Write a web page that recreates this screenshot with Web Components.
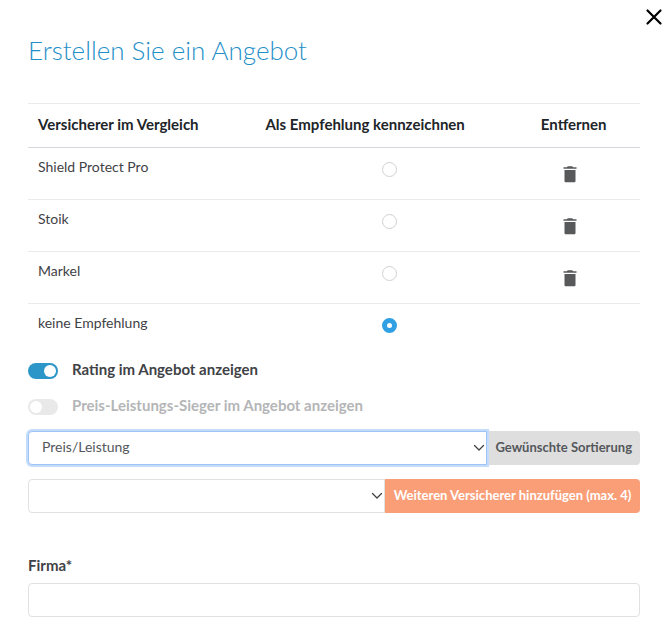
<!DOCTYPE html>
<html lang="de">
<head>
<meta charset="utf-8">
<meta name="viewport" content="width=device-width, initial-scale=1">
<title>Erstellen Sie ein Angebot</title>
<style>
    body{
        margin:0;
        background:#fff;
        color:#3f4246;
        font-family: Lato, "Liberation Sans", sans-serif;
        font-size:14px;
        line-height:20px;
    }
</style>
</head>
<body>
<offer-dialog>
    <span slot="title">Erstellen Sie ein Angebot</span>
    <insurer-table></insurer-table>
    <toggle-switch checked>Rating im Angebot anzeigen</toggle-switch>
    <toggle-switch disabled>Preis-Leistungs-Sieger im Angebot anzeigen</toggle-switch>
    <sort-select></sort-select>
    <add-insurer>Weiteren Versicherer hinzufügen (max. 4)</add-insurer>
    <text-field>Firma*</text-field>
</offer-dialog>

<script>
const CHEVRON = `<svg class="chevron" viewBox="0 0 12 12" aria-hidden="true"><path d="M1.5 3.5 6 8l4.5-4.5" fill="none" stroke="#3f4246" stroke-width="1.3" stroke-linecap="round" stroke-linejoin="round"/></svg>`;

//Estilos comunes de los grupos select + etiqueta o botón
const GROUP_CSS = `
    :host{ display:block; }
    .group{ display:flex; height:34px; }
    .box{ display:grid; flex:1; min-width:0; align-items:center; }
    select{
        grid-area:1 / 1;
        box-sizing:border-box;
        width:100%;
        height:34px;
        margin:0;
        padding:0 28px 2px 13px;
        appearance:none;
        border:1px solid #e0e1e3;
        border-radius:4px 0 0 4px;
        background:#fff;
        color:#54575b;
        font:inherit;
        outline:none;
    }
    .chevron{
        grid-area:1 / 1;
        justify-self:end;
        width:12px;
        height:12px;
        margin-right:2px;
        pointer-events:none;
    }
    .addon{
        box-sizing:border-box;
        display:flex;
        align-items:center;
        justify-content:center;
        margin:0;
        padding:0 8px 2px;
        border:0;
        border-radius:0 4px 4px 0;
        font:inherit;
        font-size:13px;
        font-weight:700;
        white-space:nowrap;
    }
`;

class OfferDialog extends HTMLElement {
    constructor(){
        super();
        this.attachShadow({ mode : 'open' });
        this.shadowRoot.innerHTML = this.componentCSS() + this.componentHTML();
    }

    componentCSS(){
        return `
            <style>
                :host{ display:block; }
                header{
                    display:flex;
                    justify-content:flex-end;
                    padding:7px 6px 0;
                }
                button{
                    display:flex;
                    margin:0;
                    padding:0;
                    border:0;
                    background:none;
                    cursor:pointer;
                }
                svg{ width:20px; height:20px; }
                main{ padding:0 30px 12px 28px; }
                h1{
                    margin:7px 0 37px;
                    color:#1f8fc8;
                    font-size:26px;
                    font-weight:300;
                    line-height:32px;
                }
                ::slotted(toggle-switch){ margin-bottom:16px; }
                ::slotted(sort-select){ margin-bottom:14px; }
                ::slotted(add-insurer){ margin-bottom:42px; }
            </style>`;
    }

    componentHTML(){
        return `
            <header>
                <button type="button" id="close" aria-label="Schließen">
                    <svg viewBox="0 0 20 20" aria-hidden="true"><path d="M3.5 3.5 16.5 16.5M16.5 3.5 3.5 16.5" stroke="#000" stroke-width="2.2" stroke-linecap="round"/></svg>
                </button>
            </header>
            <main>
                <h1><slot name="title"></slot></h1>
                <slot></slot>
            </main>`;
    }

    connectedCallback(){
        this.shadowRoot.getElementById('close').addEventListener('click', e => this.remove())
    }
}

class InsurerTable extends HTMLElement {
    constructor(){
        super();
        this.insurers = [
            { id : 'shield', nombre : 'Shield Protect Pro' },
            { id : 'stoik', nombre : 'Stoik' },
            { id : 'markel', nombre : 'Markel' }
        ];
        this.attachShadow({ mode : 'open' });
        this.shadowRoot.innerHTML = this.componentCSS() + this.componentHTML();
        this.table = this.shadowRoot.getElementById('tableContent');
    }

    componentCSS(){
        return `
            <style>
                :host{ display:block; margin-bottom:11px; }
                table{
                    width:100%;
                    table-layout:fixed;
                    border-collapse:collapse;
                }
                th, td{
                    box-sizing:border-box;
                    padding:0 0 0 10px;
                    border-top:1px solid #e9eaec;
                    text-align:left;
                }
                th{
                    height:44px;
                    padding:0 0 4px 11px;
                    border-bottom:1px solid #d5d9dd;
                    color:#212529;
                    font-size:15px;
                    font-weight:700;
                    white-space:nowrap;
                }
                th:first-child{ padding-left:10px; }
                td{
                    height:52px;
                    padding-top:9px;
                    vertical-align:top;
                }
                tr:last-child td{ height:44px; }
                th:nth-child(1){ width:37%; }
                th:nth-child(2){ width:45%; }
                td:nth-child(2){
                    padding:14px 6px 0 0;
                    text-align:center;
                }
                td:nth-child(3){ padding:14px 0 0 28px; }
                input{
                    appearance:none;
                    box-sizing:border-box;
                    display:block;
                    width:15px;
                    height:15px;
                    margin:0 auto;
                    border:1px solid #cfd1d4;
                    border-radius:50%;
                    background:#fff;
                }
                input:checked{
                    border:5px solid #2fa0e3;
                }
                button{
                    display:block;
                    margin:0;
                    padding:0;
                    border:0;
                    background:none;
                    cursor:pointer;
                }
                svg{ display:block; width:24px; height:24px; }
            </style>`;
    }

    componentHTML(){
        return `
            <table>
                <thead>
                    <tr>
                        <th>Versicherer im Vergleich</th>
                        <th>Als Empfehlung kennzeichnen</th>
                        <th>Entfernen</th>
                    </tr>
                </thead>
                <tbody id="tableContent"></tbody>
            </table>`;
    }

    //Relleno de la tabla
    makeTableContent(data){
        let table = "";
        data.forEach(obj => {
            table +=
                `<tr>
                    <td><label for="${obj.id}">${obj.nombre}</label></td>
                    <td><input type="radio" name="recommended" id="${obj.id}"></td>
                    <td>
                        <button type="button" data-delete-id="${obj.id}" aria-label="${obj.nombre} entfernen">
                            <svg viewBox="0 0 24 24" aria-hidden="true"><path d="M6.5 19c0 .8.5 1.3 1.3 1.3h8.4c.8 0 1.3-.5 1.3-1.3V8h-11zM18.5 5.2h-3.3l-1-1h-4.400l-1 1H5.500v1.600h13z" fill="#58595b"/></svg>
                        </button>
                    </td>
                </tr>`;
        })
        return table +
            `<tr>
                <td><label for="none">keine Empfehlung</label></td>
                <td><input type="radio" name="recommended" id="none" checked></td>
                <td></td>
            </tr>`;
    }

    connectedCallback(){
        this.table.innerHTML = this.makeTableContent(this.insurers);
        this.table.addEventListener('click', e => {
            const button = e.target.closest('[data-delete-id]');
            if(button){ button.closest('tr').remove() }
        })
    }
}

class ToggleSwitch extends HTMLElement {
    constructor(){
        super();
        this.attachShadow({ mode : 'open' });
        this.shadowRoot.innerHTML = this.componentCSS() + this.componentHTML();
    }

    componentCSS(){
        return `
            <style>
                :host{ display:block; color:#3f4246; }
                :host([disabled]){ color:#b4b5b7; }
                label{
                    display:flex;
                    align-items:center;
                    gap:14px;
                    font-size:15px;
                    font-weight:700;
                }
                input{
                    appearance:none;
                    box-sizing:border-box;
                    display:flex;
                    flex:none;
                    width:30px;
                    height:16px;
                    margin:4px 0 0;
                    padding:2px;
                    border-radius:8px;
                    background:#e9e9e9;
                }
                input::before{
                    content:"";
                    width:12px;
                    height:12px;
                    border-radius:50%;
                    background:#fff;
                }
                input:checked{
                    justify-content:flex-end;
                    background:#2c96c8;
                }
            </style>`;
    }

    componentHTML(){
        return `
            <label>
                <input type="checkbox" role="switch" ${this.hasAttribute('checked') ? 'checked' : ''} ${this.hasAttribute('disabled') ? 'disabled' : ''}>
                <span><slot></slot></span>
            </label>`;
    }
}

class SortSelect extends HTMLElement {
    constructor(){
        super();
        this.attachShadow({ mode : 'open' });
        this.shadowRoot.innerHTML = this.componentCSS() + this.componentHTML();
    }

    componentCSS(){
        return `
            <style>
                ${GROUP_CSS}
                .box{ z-index:1; }
                select{
                    border-color:#9fc3f5;
                    box-shadow:0 0 0 2px #c4dcfb;
                }
                .addon{
                    flex:0 0 151px;
                    background:#dedede;
                    color:#54575b;
                }
            </style>`;
    }

    componentHTML(){
        return `
            <div class="group">
                <div class="box">
                    <select id="sort">
                        <option>Preis/Leistung</option>
                        <option>Preis</option>
                        <option>Leistung</option>
                    </select>
                    ${CHEVRON}
                </div>
                <label class="addon" for="sort">Gewünschte Sortierung</label>
            </div>`;
    }
}

class AddInsurer extends HTMLElement {
    constructor(){
        super();
        this.attachShadow({ mode : 'open' });
        this.shadowRoot.innerHTML = this.componentCSS() + this.componentHTML();
    }

    componentCSS(){
        return `
            <style>
                ${GROUP_CSS}
                .addon{
                    flex:0 0 255px;
                    background:#fa9e78;
                    color:#fff;
                    cursor:pointer;
                }
            </style>`;
    }

    componentHTML(){
        return `
            <div class="group">
                <div class="box">
                    <select aria-label="Versicherer">
                        <option></option>
                    </select>
                    ${CHEVRON}
                </div>
                <button type="button" class="addon"><slot></slot></button>
            </div>`;
    }
}

class TextField extends HTMLElement {
    constructor(){
        super();
        this.attachShadow({ mode : 'open' });
        this.shadowRoot.innerHTML = this.componentCSS() + this.componentHTML();
    }

    componentCSS(){
        return `
            <style>
                :host{ display:block; }
                label{
                    display:block;
                    margin-bottom:8px;
                    font-size:15px;
                    font-weight:700;
                }
                input{
                    box-sizing:border-box;
                    display:block;
                    width:100%;
                    height:34px;
                    margin:0;
                    padding:0 14px;
                    border:1px solid #e0e1e3;
                    border-radius:4px;
                    background:#fff;
                    color:inherit;
                    font:inherit;
                }
            </style>`;
    }

    componentHTML(){
        return `
            <label for="field"><slot></slot></label>
            <input type="text" id="field" required>`;
    }
}

window.customElements.define('offer-dialog', OfferDialog)
window.customElements.define('insurer-table', InsurerTable)
window.customElements.define('toggle-switch', ToggleSwitch)
window.customElements.define('sort-select', SortSelect)
window.customElements.define('add-insurer', AddInsurer)
window.customElements.define('text-field', TextField)
</script>
</body>
</html>
